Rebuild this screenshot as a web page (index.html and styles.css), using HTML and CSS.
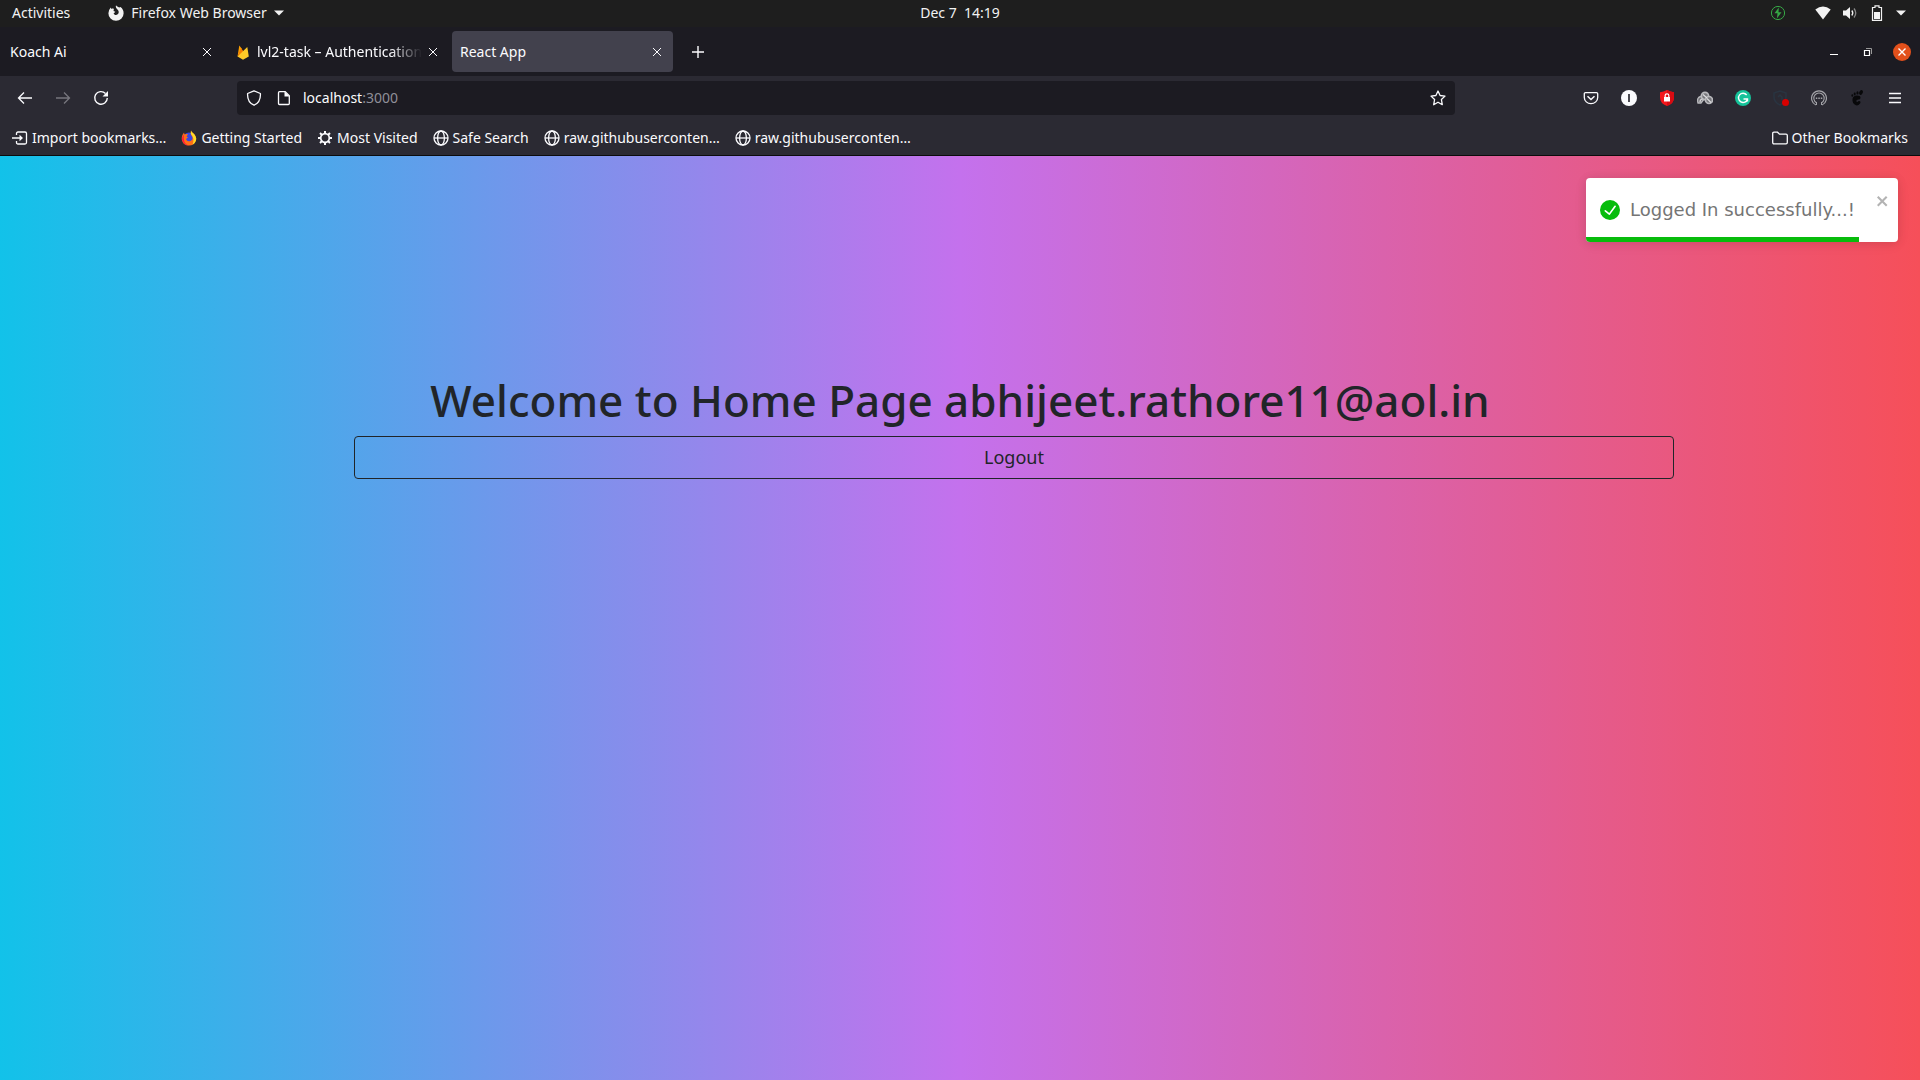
FILE: index.html
```html
<!DOCTYPE html>
<html lang="en">
<head>
<meta charset="utf-8">
<title>React App</title>
<link rel="stylesheet" href="styles.css">
</head>
<body>
<svg class="sprite" aria-hidden="true">
  <symbol id="x" viewBox="0 0 16 16"><path d="M4 4l8 8M12 4l-8 8" fill="none" stroke="currentColor" stroke-width="1"/></symbol>
  <symbol id="caret" viewBox="0 0 10 6"><path d="M0 .5h10L5 5.5z" fill="currentColor"/></symbol>
  <symbol id="globe" viewBox="0 0 16 16"><g fill="none" stroke="currentColor" stroke-width="1.3"><circle cx="8" cy="8" r="7"/><ellipse cx="8" cy="8" rx="3.4" ry="7"/><path d="M1 8h14"/></g></symbol>
</svg>

<header class="system">
  <div class="system-left">
    <button class="plain">Activities</button>
    <button class="plain app-menu">
      <svg width="16" height="16" viewBox="0 0 16 16"><path d="M8 .2c.6 1.200 2 1.500 3.200 2.200L12.500 2Q15.800 4.500 15.600 8.500A7.600 7.400 0 0 1 .4 8.300Q.5 5 2.800 2.600l.5 1.300c.8-.4 1.700-.4 2.600 0L5.500 6l1.800.8c-.3.9-1.500 1-1.600 1.600.5 1.500 2.500 2 4 .9 1.600-1.400 1.200-3.500 0-4.600C8.400 3.500 7.300 2 8 .2z" fill="#f2f2f2"/></svg>
      <span>Firefox Web Browser</span>
      <svg width="10" height="6"><use href="#caret"/></svg>
    </button>
  </div>
  <time class="clock">Dec 7&nbsp; 14:19</time>
  <div class="tray">
    <svg class="power" width="16" height="16" viewBox="0 0 16 16"><circle cx="8" cy="8" r="6.600" fill="none" stroke="#36a845" stroke-width="1"/><path d="M8.800 2.500L4.500 8.300h3l-.6 5.200 4.600-6.200h-3z" fill="#36a845"/></svg>
    <svg width="16" height="16" viewBox="0 0 16 16"><path d="M.3 4.500Q8-1.500 15.700 4.500L8 14.500z" fill="#f2f2f2"/></svg>
    <svg width="16" height="16" viewBox="0 0 16 16"><path d="M1 5.500h3L8 2v12l-4-3.500H1z" fill="#f2f2f2"/><path d="M9.800 5.500q2 2.500 0 5" fill="none" stroke="#f2f2f2" stroke-width="1.300"/><path d="M12 3.500q3.500 4.500 0 9" fill="none" stroke="#888" stroke-width="1.300"/></svg>
    <svg width="16" height="16" viewBox="0 0 16 16"><path d="M6 .8h4v1.700h2.500v12.800h-9V2.500H6z" fill="none" stroke="#f2f2f2" stroke-width="1.200"/><path d="M5 7h6v7H5z" fill="#f2f2f2"/></svg>
    <svg width="10" height="6"><use href="#caret"/></svg>
  </div>
</header>

<div class="tabs">
  <div class="tab"><span class="tab-title">Koach Ai</span><button class="close" aria-label="Close tab"><svg width="16" height="16"><use href="#x"/></svg></button></div>
  <div class="tab">
    <svg class="favicon" width="16" height="16" viewBox="0 0 16 16"><path d="M2.500 12.500L4.300 1.500 7 5z" fill="#ffa000"/><path d="M2.500 12.500L6 4l3 4z" fill="#f57c00"/><path d="M2.500 12.500L12.300 3l1.500 9.500L8 15.700z" fill="#ffca28"/></svg>
    <span class="tab-title fading">lvl2-task – Authentication</span><button class="close" aria-label="Close tab"><svg width="16" height="16"><use href="#x"/></svg></button>
  </div>
  <div class="tab active"><span class="tab-title">React App</span><button class="close" aria-label="Close tab"><svg width="16" height="16"><use href="#x"/></svg></button></div>
  <button class="icon-button new-tab" aria-label="New tab"><svg width="16" height="16" viewBox="0 0 16 16"><path d="M8 2v12M2 8h12" stroke="currentColor" stroke-width="1.400"/></svg></button>
  <div class="window-controls">
    <button class="plain" aria-label="Minimize"><svg width="18" height="18" viewBox="0 0 18 18"><path d="M5 11.500h8" stroke="#fff"/></svg></button>
    <button class="plain" aria-label="Restore"><svg width="18" height="18" viewBox="0 0 18 18"><path d="M5.500 7.500h5v5h-5z" fill="none" stroke="#fff" stroke-width="1.200"/><path d="M7 5.500h5.500V11" fill="none" stroke="#999"/></svg></button>
    <button class="plain" aria-label="Close window"><svg width="18" height="18" viewBox="0 0 18 18"><circle cx="9" cy="9" r="9" fill="#e2501b"/><path d="M5.500 5.500l7 7M12.500 5.500l-7 7" stroke="#fff" stroke-width="1.400"/></svg></button>
  </div>
</div>

<nav class="navigation">
  <div class="history">
    <button class="icon-button" aria-label="Back"><svg width="16" height="16" viewBox="0 0 16 16"><path d="M15 8H1.500M7 2.500L1.500 8 7 13.500" fill="none" stroke="currentColor" stroke-width="1.300"/></svg></button>
    <button class="icon-button" aria-label="Forward" disabled><svg width="16" height="16" viewBox="0 0 16 16"><path d="M1 8h13.500M9 2.500L14.500 8 9 13.500" fill="none" stroke="currentColor" stroke-width="1.300"/></svg></button>
    <button class="icon-button" aria-label="Reload"><svg width="16" height="16" viewBox="0 0 16 16"><path d="M12.500 3.500A6.300 6.300 0 1 0 14.300 8" fill="none" stroke="currentColor" stroke-width="1.400"/><path d="M15 1v5.500H9.500z" fill="currentColor"/></svg></button>
  </div>
  <div class="address">
    <svg width="16" height="16" viewBox="0 0 16 16"><path d="M8 .8l6.400 2.700c.3 5-1.800 9.700-6.400 11.700C3.400 13.200 1.300 8.500 1.600 3.500z" fill="none" stroke="#fbfbfe" stroke-width="1.300" stroke-linejoin="round"/></svg>
    <svg width="16" height="16" viewBox="0 0 16 16"><path d="M3.500 1.700h5.700l4.100 4.100v7.700q0 1-1 1H3.500q-1 0-1-1V2.700q0-1 1-1z" fill="none" stroke="#fbfbfe" stroke-width="1.300"/><path d="M8.500 1.500v5h5z" fill="#fbfbfe"/></svg>
    <a class="url" href="#">localhost<span class="port">:3000</span></a>
    <button class="icon-button star" aria-label="Bookmark this page"><svg width="16" height="16" viewBox="0 0 16 16"><path d="M8 1l2.100 4.500 4.900.6-3.600 3.400.9 5.200L8 12.200l-4.300 2.500.9-5.200L1 6.100l4.900-.6z" fill="none" stroke="currentColor" stroke-width="1.300" stroke-linejoin="round"/></svg></button>
  </div>
  <div class="extensions">
    <button class="icon-button" aria-label="Save to Pocket"><svg width="16" height="16" viewBox="0 0 16 16"><path d="M2.500 2.600h11q1.200 0 1.200 1.200v3.700a6.700 6.200 0 0 1-13.400 0V3.800q0-1.200 1.200-1.200z" fill="none" stroke="currentColor" stroke-width="1.300"/><path d="M4.500 6.200L8 9.500l3.500-3.300" fill="none" stroke="currentColor" stroke-width="1.500"/></svg></button>
    <button class="icon-button" aria-label="Extension"><svg width="16" height="16" viewBox="0 0 16 16"><circle cx="8" cy="8" r="8" fill="#fbfbfe"/><path d="M8 4v8" stroke="#2b2a33" stroke-width="1.700"/></svg></button>
    <button class="icon-button" aria-label="Ad blocker"><svg width="16" height="16" viewBox="0 0 16 16"><path d="M8 0q3.500 2 7 2.200v5.300q0 6-7 8.500-7-2.500-7-8.500V2.200Q4.500 2 8 0z" fill="#f4161b"/><path d="M8 0q3.500 2 7 2.200v5.300q0 6-7 8.500z" fill="#d80b12"/><path d="M5 7h6v4.500H5z" fill="#fff"/><path d="M6.200 7V5.300q0-1.500 1.800-1.500t1.800 1.500V7" fill="none" stroke="#fff" stroke-width="1.200"/></svg></button>
    <button class="icon-button" aria-label="Cloud tools"><svg width="16" height="16" viewBox="0 0 16 16"><g fill="#77777c" stroke="#b9b9bd"><path d="M1 13q-1.500-5.500 2.500-6.500 3-.3 3.500 2.500L4 13z" stroke-width="1.300"/><circle cx="8" cy="6" r="3.600" stroke-width="1.700"/><circle cx="12" cy="10" r="3.500" stroke-width="1.700"/><path d="M3 12q0-3 2.500-3M6 4.500l4 3.500M10 8.500l4 4" fill="none" stroke="#dedee0" stroke-width="1.100"/></g></svg></button>
    <button class="icon-button" aria-label="Grammarly"><svg width="16" height="16" viewBox="0 0 16 16"><circle cx="8" cy="8" r="8" fill="#15c39a"/><path d="M11.700 5A4.600 4.600 0 1 0 12.500 9.200M8.500 9h4v2.500" fill="none" stroke="#fff" stroke-width="1.400"/></svg></button>
    <button class="icon-button" aria-label="Privacy shield"><svg width="16" height="16" viewBox="0 0 16 16"><path d="M7 1l6 2v4q0 5-6 8Q1 12 1 7V3zM5 7l2-2 2 2v3" fill="none" stroke="#293441" stroke-width="1.500"/><circle cx="12.500" cy="12.500" r="3.500" fill="#d70000"/></svg></button>
    <button class="icon-button" aria-label="Web tools"><svg width="16" height="16" viewBox="0 0 16 16"><g fill="none" stroke="#a3a3a8"><path d="M5 15A7.400 7.400 0 1 1 11 15" stroke-width="1.200"/><path d="M5.500 12.700A5.200 5.200 0 1 1 10.500 12.700" stroke-width="1.100"/><path d="M5.500 12v3M10.500 12v3"/><path d="M4.800 8.300h6.500" stroke-width="1.500" stroke-dasharray="1.500 1"/></g></svg></button>
    <button class="icon-button" aria-label="GNOME Shell"><svg width="16" height="16" viewBox="0 0 16 16"><g fill="#08080a"><path d="M3.500 9Q4 5.500 8 5.500q3.500 0 3.500 2.200 0 1.800-2.200 1.900-2 .1-2 1.400 0 1 1.200 1 1-1.400 2.500-.7 1 .7.200 2Q9.700 16 7 15.300 3 13.800 3.500 9z"/><ellipse cx="12" cy="2.500" rx="1.700" ry="2.500" transform="rotate(25 12 2.500)"/><ellipse cx="8.500" cy="2.900" rx="1.100" ry="1.700"/><ellipse cx="5.700" cy="4" rx="1" ry="1.400"/><ellipse cx="3.300" cy="5.500" rx=".9" ry="1.200"/></g></svg></button>
    <button class="icon-button" aria-label="Open menu"><svg width="16" height="16" viewBox="0 0 16 16"><path d="M2 3.500h12M2 8h12M2 12.500h12" stroke="currentColor" stroke-width="1.400"/></svg></button>
  </div>
</nav>

<div class="bookmarks">
  <a href="#"><svg width="16" height="16" viewBox="0 0 16 16"><path d="M4.500 5V3.500q0-1.500 1.500-1.500h7q1.500 0 1.500 1.500v9q0 1.500-1.500 1.500H6q-1.500 0-1.500-1.500V11M0 8h9" fill="none" stroke="currentColor" stroke-width="1.300"/><path d="M7.500 4.800L11 8l-3.500 3.200z" fill="currentColor"/></svg><span>Import bookmarks…</span></a>
  <a href="#"><svg width="16" height="16" viewBox="0 0 16 16"><circle cx="8" cy="8.500" r="6" fill="#3947e0"/><path d="M10 .5q.5 1.500 2 2.500 4 3.500 3 7.500-1.700 5-7 5-5.500 0-7-5Q0 6.500 3 2.500l.5 2q1.500-1 3.500-.3L5.500 6.500l1.500.9-2 1.600q1 3 4 2.200 3-1 2.500-4.200Q9 4 10 .5z" fill="#ff6f16"/><path d="M1.300 7q-1 3 1.200 6 2.500 2.800 6 2.500-4-.7-5.200-4Q2.300 8 3 4.500z" fill="#ff173d"/><path d="M10 .5q.5 1.500 2 2.500 4 3.500 3 7.500-1 3-3.500 4.200Q14 8 9.800 4z" fill="#ffda28"/></svg><span>Getting Started</span></a>
  <a href="#"><svg width="16" height="16" viewBox="0 0 16 16"><g fill="none" stroke="currentColor"><circle cx="8" cy="8" r="4.300" stroke-width="1.700"/><path d="M8 1v3M8 12v3M1 8h3M12 8h3M3 3l2.200 2.200M10.800 10.800L13 13M3 13l2.200-2.200M10.800 5.200L13 3" stroke-width="2"/></g></svg><span>Most Visited</span></a>
  <a href="#"><svg width="16" height="16"><use href="#globe"/></svg><span>Safe Search</span></a>
  <a href="#"><svg width="16" height="16"><use href="#globe"/></svg><span>raw.githubuserconten…</span></a>
  <a href="#"><svg width="16" height="16"><use href="#globe"/></svg><span>raw.githubuserconten…</span></a>
  <a class="other" href="#"><svg width="16" height="16" viewBox="0 0 16 16"><path d="M.7 12.500v-9q0-1.300 1.300-1.300h3.500l2 2H14q1.300 0 1.300 1.300v7q0 1.300-1.300 1.300H2q-1.300 0-1.300-1.300z" fill="none" stroke="currentColor" stroke-width="1.300"/></svg><span>Other Bookmarks</span></a>
</div>

<main class="page">
  <section class="welcome">
    <h1>Welcome to Home Page abhijeet.rathore11@aol.in</h1>
    <button class="logout">Logout</button>
  </section>
  <div class="toast" role="alert">
    <div class="toast-body">
      <svg width="20" height="20" viewBox="0 0 24 24"><path d="M12 0a12 12 0 1 0 12 12A12.014 12.014 0 0 0 12 0zm6.927 8.200l-6.845 9.289a1.011 1.011 0 0 1-1.430.188l-4.888-3.908a1 1 0 1 1 1.250-1.562l4.076 3.261 6.227-8.451a1 1 0 1 1 1.610 1.183z" fill="#07bc0c"/></svg>
      <span>Logged In successfully...!</span>
    </div>
    <button class="toast-close" aria-label="Close"><svg width="14" height="16" viewBox="0 0 14 16"><path fill="currentColor" fill-rule="evenodd" d="M7.710 8.230l3.750 3.750-1.480 1.480-3.750-3.750-3.750 3.750L1 11.980l3.750-3.750L1 4.480 2.480 3l3.750 3.750L9.980 3l1.480 1.480-3.750 3.750z"/></svg></button>
    <div class="toast-progress"></div>
  </div>
</main>
</body>
</html>
```
FILE: styles.css
```css
* { box-sizing: border-box; }

body {
  margin: 0;
  min-height: 100vh;
  display: flex;
  flex-direction: column;
  background: #2b2a33;
  color: #fbfbfe;
  font: 14px/20px "Noto Sans", sans-serif;
}

button { font: inherit; color: inherit; border: 0; background: none; padding: 0; }
a { color: inherit; text-decoration: none; }
svg { display: block; flex: none; }
.sprite { position: absolute; width: 0; height: 0; }
.plain { display: flex; align-items: center; }

/* Desktop top bar */
.system {
  display: grid;
  grid-template-columns: 1fr auto 1fr;
  align-items: center;
  height: 27px;
  padding: 0 14px 2px;
  background: #1e1e1e;
  color: #f2f2f2;
}
.system-left { display: flex; gap: 38px; margin-left: -2px; }
.app-menu { gap: 7px; }
.tray { display: flex; align-items: center; justify-content: flex-end; gap: 11px; }
.power { margin-right: 18px; }

/* Tab strip */
.tabs {
  display: flex;
  align-items: center;
  gap: 4px;
  height: 49px;
  padding: 0 9px 0 2px;
  background: #1c1b22;
}
.tab {
  display: flex;
  align-items: center;
  width: 221px;
  height: 41px;
  padding: 0 4px 0 8px;
  border-radius: 4px;
}
.tab.active { background: #42414d; }
.favicon { margin-right: 6px; }
.tab-title { flex: 1; white-space: nowrap; }
.fading {
  -webkit-mask-image: linear-gradient(to left, transparent, #000 32px);
  mask-image: linear-gradient(to left, transparent, #000 32px);
}
.close { display: grid; place-items: center; width: 24px; height: 24px; }
.icon-button { display: grid; place-items: center; width: 38px; height: 34px; }
.icon-button:disabled { color: #77767e; }
.new-tab { width: 42px; }
.window-controls { display: flex; gap: 16px; margin-left: auto; }

/* Navigation toolbar */
.navigation { display: flex; align-items: center; height: 44px; padding: 0 6px; }
.history { display: flex; width: 231px; }
.address {
  flex: 1;
  display: flex;
  align-items: center;
  gap: 14px;
  height: 34px;
  padding: 0 0 0 9px;
  border-radius: 4px;
  background: #1c1b22;
}
.url { flex: 1; margin-left: -3px; }
.port { color: #8f8f98; }
.star { width: 34px; }
.extensions { display: flex; margin-left: 117px; }

/* Bookmarks toolbar */
.bookmarks {
  display: flex;
  align-items: center;
  gap: 15px;
  height: 36px;
  padding: 0 12px;
  border-bottom: 1px solid #0c0c0d;
}
.bookmarks a { display: flex; align-items: center; gap: 4px; white-space: nowrap; }
.bookmarks .other { margin-left: auto; }

/* Web page */
.page {
  position: relative;
  flex: 1;
  padding: 216px 24px 24px;
  background: linear-gradient(to right, #12c2e9, #c471ed, #f64f59);
  color: #212529;
}
.welcome { max-width: 1320px; margin: 0 auto; text-align: center; }
h1 { margin: 0 0 8px; font-size: 44px; line-height: 56px; font-weight: 500; }
.logout {
  width: 100%;
  height: 43px;
  margin-left: 54px;
  padding-bottom: 2px;
  border: 1px solid #212529;
  border-radius: 4px;
  font-size: 18px;
}

.toast {
  position: absolute;
  top: 22px;
  right: 22px;
  display: flex;
  width: 312px;
  height: 64px;
  padding: 8px;
  overflow: hidden;
  border-radius: 4px;
  background: #fff;
  color: #757575;
  box-shadow: 0 1px 10px rgba(0, 0, 0, .1), 0 2px 15px rgba(0, 0, 0, .05);
  font: 18px/24px "DejaVu Sans", sans-serif;
}
.toast-body { flex: 1; display: flex; align-items: center; gap: 10px; padding: 0 6px; white-space: nowrap; }
.toast-close { align-self: flex-start; margin-top: 7px; color: #b3b3b3; }
.toast-progress { position: absolute; left: 0; bottom: 0; width: 273px; height: 5px; background: #07bc0c; }
```
